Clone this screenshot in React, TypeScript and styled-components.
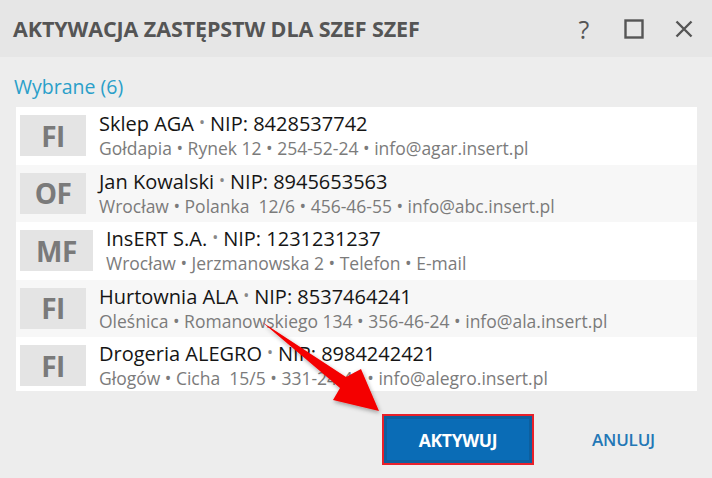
import styled, { createGlobalStyle } from "styled-components";

const GlobalStyle = createGlobalStyle`
  html, body {
    margin: 0;
    padding: 0;
    background: #ededed;
  }
  * {
    box-sizing: border-box;
  }
`;

const Dialog = styled.div`
  position: relative;
  width: 712px;
  height: 478px;
  background: #ededed;
  font-family: "Open Sans", "Noto Sans", sans-serif;
  display: flex;
  flex-direction: column;
  overflow: hidden;
`;

const TitleBar = styled.div`
  height: 57px;
  background: #e6e6e6;
  display: flex;
  align-items: center;
  padding: 0 11px 0 13px;
`;

const Title = styled.div`
  flex: 1;
  font-size: 21.5px;
  font-weight: 700;
  color: #555;
  letter-spacing: -0.1px;
`;

const TitleIcons = styled.div`
  display: flex;
  align-items: center;
  gap: 16px;
`;

const IconButton = styled.button`
  border: none;
  background: none;
  padding: 0;
  width: 34px;
  height: 30px;
  display: flex;
  align-items: center;
  justify-content: center;
  color: #555;
  font-family: "Open Sans", sans-serif;
  font-size: 25px;
`;

const Body = styled.div`
  display: flex;
  flex-direction: column;
  padding: 16px 15px 0 16px;
`;

const SectionLabel = styled.div`
  font-size: 19.5px;
  color: #2a9fc9;
  margin-left: -2px;
  height: 34px;
  line-height: 28px;
`;

const List = styled.div`
  width: 681px;
  height: 284px;
  overflow: hidden;
  background: #fff;
`;

const Row = styled.div<{ $alt: boolean }>`
  height: 57.5px;
  display: flex;
  align-items: center;
  padding-left: 4px;
  background: ${(p) => (p.$alt ? "#f7f7f7" : "#ffffff")};
`;

const Badge = styled.div<{ $wide: boolean }>`
  width: ${(p) => (p.$wide ? 73 : 66)}px;
  height: 41px;
  background: #e4e4e4;
  color: #7a7a7a;
  font-size: 28px;
  font-weight: 700;
  letter-spacing: -0.5px;
  display: flex;
  align-items: center;
  justify-content: center;
  margin-right: 13px;
`;

const Info = styled.div`
  display: flex;
  flex-direction: column;
  margin-top: -2px;
`;

const Name = styled.div`
  font-size: 20px;
  color: #151515;
  line-height: 26px;
  white-space: nowrap;
`;

const Dot = styled.span`
  color: #888;
  font-size: 16px;
  margin: 0 5px;
  vertical-align: 3px;
`;

const Details = styled.div`
  font-size: 17.5px;
  color: #7b7b7b;
  line-height: 23px;
  white-space: pre;
`;

const Footer = styled.div`
  flex: 1;
  display: flex;
  align-items: flex-start;
  justify-content: flex-end;
  gap: 28px;
  padding: 23px 27px 0 0;
`;

const PrimaryButton = styled.button`
  width: 152px;
  height: 51px;
  border: 2px solid #e8202a;
  background: #0a6cb6;
  box-shadow: inset 0 0 0 3px #0d5f9e;
  color: #fff;
  font-family: "Open Sans", sans-serif;
  font-weight: 700;
  font-size: 17.5px;
  letter-spacing: -0.3px;
`;

const LinkButton = styled.button`
  width: 123px;
  height: 51px;
  border: none;
  background: none;
  color: #2377b6;
  font-family: "Open Sans", sans-serif;
  font-size: 17px;
  font-weight: 600;
  letter-spacing: -0.2px;
`;

const ArrowOverlay = styled.svg`
  position: absolute;
  left: 0;
  top: 0;
  pointer-events: none;
`;

interface Contractor {
  badge: string;
  name: string;
  nip: string;
  details: string[];
}

const contractors: Contractor[] = [
  {
    badge: "FI",
    name: "Sklep AGA",
    nip: "8428537742",
    details: ["Gołdapia", "Rynek 12", "254-52-24", "info@agar.insert.pl"],
  },
  {
    badge: "OF",
    name: "Jan Kowalski",
    nip: "8945653563",
    details: ["Wrocław", "Polanka  12/6", "456-46-55", "info@abc.insert.pl"],
  },
  {
    badge: "MF",
    name: "InsERT S.A.",
    nip: "1231231237",
    details: ["Wrocław", "Jerzmanowska 2", "Telefon", "E-mail"],
  },
  {
    badge: "FI",
    name: "Hurtownia ALA",
    nip: "8537464241",
    details: ["Oleśnica", "Romanowskiego 134", "356-46-24", "info@ala.insert.pl"],
  },
  {
    badge: "FI",
    name: "Drogeria ALEGRO",
    nip: "8984242421",
    details: ["Głogów", "Cicha  15/5", "331-24-42", "info@alegro.insert.pl"],
  },
  {
    badge: "FI",
    name: "Sklep Fajny",
    nip: "8891234567",
    details: ["Legnica", "Długa 3", "221-11-11", "info@fajny.insert.pl"],
  },
];

function App() {
  return (
    <Dialog>
      <GlobalStyle />
      <TitleBar>
        <Title>AKTYWACJA ZASTĘPSTW DLA SZEF SZEF</Title>
        <TitleIcons>
          <IconButton>?</IconButton>
          <IconButton>
            <svg width="20" height="20" viewBox="0 0 20 20">
              <rect x="1.5" y="1.5" width="17" height="17" fill="none" stroke="#555" strokeWidth="2.4" />
            </svg>
          </IconButton>
          <IconButton>
            <svg width="18" height="18" viewBox="0 0 18 18">
              <path d="M1.5 1.5 L16.5 16.5 M16.5 1.5 L1.5 16.5" stroke="#555" strokeWidth="2.4" />
            </svg>
          </IconButton>
        </TitleIcons>
      </TitleBar>
      <Body>
        <SectionLabel>Wybrane (6)</SectionLabel>
        <List>
          {contractors.map((c, i) => (
            <Row key={i} $alt={i % 2 === 1}>
              <Badge $wide={c.badge === "MF"}>{c.badge}</Badge>
              <Info>
                <Name>
                  {c.name}
                  <Dot>•</Dot>
                  NIP: {c.nip}
                </Name>
                <Details>{c.details.join(" • ")}</Details>
              </Info>
            </Row>
          ))}
        </List>
      </Body>
      <Footer>
        <PrimaryButton>AKTYWUJ</PrimaryButton>
        <LinkButton>ANULUJ</LinkButton>
      </Footer>
      <ArrowOverlay width="712" height="478" viewBox="0 0 712 478">
        <defs>
          <filter id="sh" x="-20%" y="-20%" width="140%" height="140%">
            <feDropShadow dx="1" dy="2" stdDeviation="2" floodColor="#000" floodOpacity="0.35" />
          </filter>
        </defs>
        <polygon
          points="262,322 346,377 361,369 379,411 333,400 340,388"
          fill="#f40000"
          filter="url(#sh)"
        />
      </ArrowOverlay>
    </Dialog>
  );
}

export default App;
